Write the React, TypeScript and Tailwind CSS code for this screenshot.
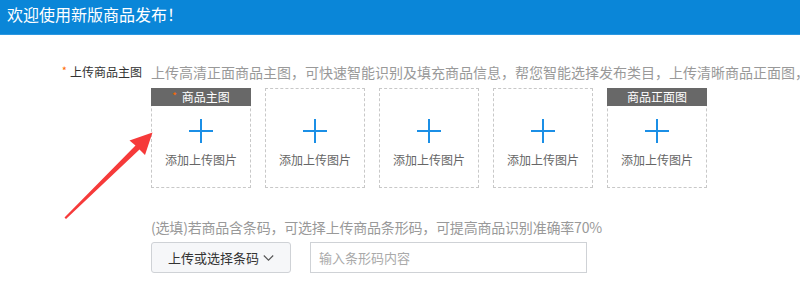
import React from "react";

const font = { fontFamily: '"Noto Sans CJK SC", "Noto Sans", sans-serif' };

function Plus() {
  return (
    <svg width="24" height="24" viewBox="0 0 24 24" className="block">
      <rect x="11" y="0" width="2" height="24" fill="#1b8fe6" />
      <rect x="0" y="11" width="24" height="2" fill="#1b8fe6" />
    </svg>
  );
}

function UploadBox({ title, star }: { title?: string; star?: boolean }) {
  return (
    <div className="relative w-[100px] h-[100px] border border-dashed border-[#c8c8c8] flex flex-col items-center">
      {title && (
        <div className="absolute -top-px -left-px -right-px h-[18px] bg-[#686868] text-white text-[12px] leading-[18px] flex items-center justify-center">
          {star && <span className="text-[#ff6a00] text-[10px] mr-[5px] -mt-[3px]">*</span>}
          <span>{title}</span>
        </div>
      )}
      <div className="mt-[30px]">
        <Plus />
      </div>
      <div className="mt-[9px] text-[12px] leading-[16px] text-[#666]">添加上传图片</div>
    </div>
  );
}

export default function App() {
  return (
    <div className="relative w-[800px] h-[289px] overflow-hidden bg-white" style={font}>
      <div className="h-[35px] bg-[#0a86d8] border-b border-[#2c97e0] pl-[7px] text-white text-[16px] leading-[28px] whitespace-nowrap">
        欢迎使用新版商品发布！
      </div>

      <div className="mt-[27px] flex h-[20px] items-center whitespace-nowrap">
        <div className="w-[151px] shrink-0 pr-[9px] flex items-center justify-end">
          <span className="text-[#ff6a00] text-[11px] mr-[3px] -mt-[3px]">*</span>
          <span className="text-[12px] text-[#333]">上传商品主图</span>
        </div>
        <div className="text-[14px] text-[#999] leading-[20px]">
          上传高清正面商品主图，可快速智能识别及填充商品信息，帮您智能选择发布类目，上传清晰商品正面图，
        </div>
      </div>

      <div className="mt-[6px] ml-[151px] flex gap-[14px]">
        <UploadBox title="商品主图" star />
        <UploadBox />
        <UploadBox />
        <UploadBox />
        <UploadBox title="商品正面图" />
      </div>

      <div className="mt-[29px] ml-[151px] text-[14px] leading-[20px] text-[#999] whitespace-nowrap tracking-[-0.2px]">
        (选填)若商品含条码，可选择上传商品条形码，可提高商品识别准确率70%
      </div>

      <div className="mt-[5px] ml-[151px] flex gap-[19px]">
        <button className="w-[140px] h-[31px] bg-[#f6f7f9] border border-[#cfd2d6] rounded-[3px] flex items-center justify-center text-[13px] text-[#333]">
          <span>上传或选择条码</span>
          <svg width="11" height="8" viewBox="0 0 11 8" className="ml-[4px]">
            <polyline points="0.8,1.5 5.5,6.2 10.2,1.5" fill="none" stroke="#555" strokeWidth="1.1" />
          </svg>
        </button>
        <div className="w-[277px] h-[31px] border border-[#cfd2d6] flex items-center pl-[8px] text-[13px] text-[#aaa]">
          输入条形码内容
        </div>
      </div>

      <svg className="absolute left-0 top-0 pointer-events-none" width="800" height="289" viewBox="0 0 800 289">
        <polygon
          points="66,219 64.5,217.5 135.5,145.5 129.5,140.5 152.5,132.5 145,155 139.5,149.5"
          fill="#f63a3a"
        />
      </svg>
    </div>
  );
}
